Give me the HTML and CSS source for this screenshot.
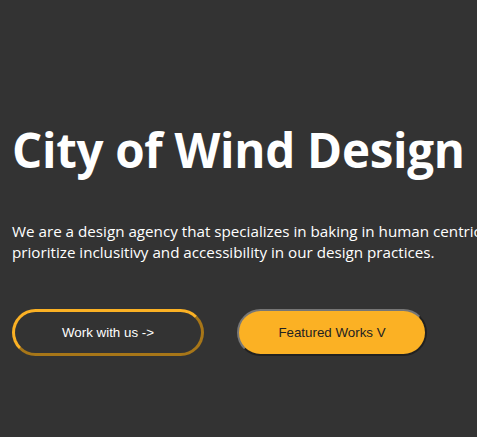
FILE: index.html
```html
<!DOCTYPE html>
<html>
<head>
<meta charset="utf-8">
<link rel="stylesheet" href="styles.css">
</head>
<body>
<main class="hero">
  <h1 class="title">City of Wind Design</h1>
  <p class="lead">We are a design agency that specializes in baking in human centric design. We<br>prioritize inclusitivy and accessibility in our design practices.</p>
  <div class="actions">
    <button class="btn btn-outline">Work with us -&gt;</button>
    <button class="btn btn-solid">Featured Works V</button>
  </div>
</main>
</body>
</html>
```
FILE: styles.css
```css
html, body {
  margin: 0;
  padding: 0;
  background: #333333;
  overflow: hidden;
  height: 100%;
}
.hero {
  padding: 120px 12px 0 12px;
  font-family: "Open Sans", "Noto Sans", sans-serif;
  color: #ffffff;
}
.title {
  margin: 0;
  font-size: 47.5px;
  font-weight: 700;
  line-height: 60px;
  white-space: nowrap;
  letter-spacing: -0.3px;
}
.lead {
  margin: 41px 0 0 0;
  font-size: 15.2px;
  line-height: 21px;
  white-space: nowrap;
}
.actions {
  display: flex;
  gap: 33px;
  margin-top: 46px;
}
.btn {
  width: 192px;
  height: 47px;
  border-radius: 24px;
  font-family: "Liberation Sans", Arial, sans-serif;
  font-size: 13.3333px;
  cursor: pointer;
}
.btn-outline {
  background: transparent;
  color: #ffffff;
  border: 3px outset #fbb124;
}
.btn-solid {
  width: 190px;
  background: #fbb124;
  color: #222222;
  border: 2px outset #767676;
}
```
